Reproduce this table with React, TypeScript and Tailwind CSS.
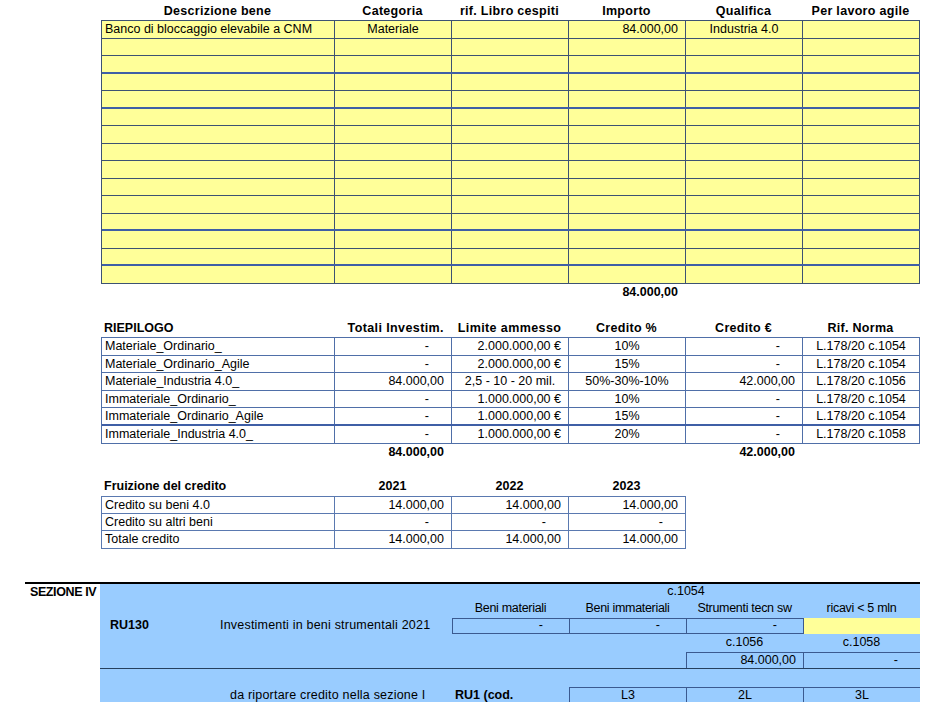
import React from "react";

const COLS = "grid grid-cols-[233px_117px_117px_117px_117px_117px]";
const THIN = "border-[#3d5273]";
const BLUE = "border-[#4f6fa8]";

type Align = "left" | "center" | "right" | "dash";

const alignClass: Record<Align, string> = {
  left: "justify-start pl-[3px]",
  center: "justify-center",
  right: "justify-end pr-[7px]",
  dash: "justify-end pr-[22px]",
};

function Cell({
  children,
  align = "left",
  className = "",
}: {
  children?: React.ReactNode;
  align?: Align;
  className?: string;
}) {
  return (
    <div className={`flex items-center overflow-hidden whitespace-nowrap ${alignClass[align]} ${className}`}>
      {children}
    </div>
  );
}

const num = (v: string): Align => (v === "-" ? "dash" : "right");

function BeniTable() {
  const headers = ["Descrizione bene", "Categoria", "rif. Libro cespiti", "Importo", "Qualifica", "Per lavoro agile"];
  const thick = [2, 4, 11, 13];
  const rows = Array.from({ length: 15 }, (_, i) => i);

  return (
    <div className="ml-[101px]">
      <div className={`${COLS} h-[20px] font-bold tracking-[0.3px]`}>
        {headers.map((h) => (
          <Cell key={h} align="center" className="pt-[2px]">
            {h}
          </Cell>
        ))}
      </div>
      <div className={`w-fit border-l border-t ${THIN} bg-[#ffff99]`}>
        {rows.map((i) => (
          <div
            key={i}
            className={`${COLS} h-[17.5px] ${
              thick.includes(i) ? "border-b-2 border-[#3f5fa6]" : `border-b ${THIN}`
            }`}
          >
            <Cell className={`border-r ${THIN}`}>{i === 0 ? "Banco di bloccaggio elevabile a CNM" : ""}</Cell>
            <Cell align="center" className={`border-r ${THIN}`}>
              {i === 0 ? "Materiale" : ""}
            </Cell>
            <Cell className={`border-r ${THIN}`} />
            <Cell align="right" className={`border-r ${THIN}`}>
              {i === 0 ? "84.000,00" : ""}
            </Cell>
            <Cell align="center" className={`border-r ${THIN}`}>
              {i === 0 ? "Industria 4.0" : ""}
            </Cell>
            <Cell className={`border-r ${THIN}`} />
          </div>
        ))}
      </div>
      <div className={`${COLS} h-[18px] font-bold`}>
        <div />
        <div />
        <div />
        <Cell align="right">84.000,00</Cell>
      </div>
    </div>
  );
}

const riepilogo = [
  ["Materiale_Ordinario_", "-", "2.000.000,00 €", "10%", "-", "L.178/20 c.1054"],
  ["Materiale_Ordinario_Agile", "-", "2.000.000,00 €", "15%", "-", "L.178/20 c.1054"],
  ["Materiale_Industria 4.0_", "84.000,00", "2,5 - 10 - 20 mil.", "50%-30%-10%", "42.000,00", "L.178/20 c.1056"],
  ["Immateriale_Ordinario_", "-", "1.000.000,00 €", "10%", "-", "L.178/20 c.1054"],
  ["Immateriale_Ordinario_Agile", "-", "1.000.000,00 €", "15%", "-", "L.178/20 c.1054"],
  ["Immateriale_Industria 4.0_", "-", "1.000.000,00 €", "20%", "-", "L.178/20 c.1058"],
];

function RiepilogoTable() {
  return (
    <div className="ml-[101px] mt-[17.5px]">
      <div className={`${COLS} h-[18px] font-bold`}>
        <Cell>RIEPILOGO</Cell>
        <Cell align="right" className="tracking-[0.4px] pr-[5px]">
          Totali Investim.
        </Cell>
        <Cell align="center" className="tracking-[0.4px]">
          Limite ammesso
        </Cell>
        <Cell align="center" className="tracking-[0.3px]">
          Credito %
        </Cell>
        <Cell align="center" className="tracking-[0.3px]">
          Credito €
        </Cell>
        <Cell align="center" className="tracking-[0.3px]">
          Rif. Norma
        </Cell>
      </div>
      <div className={`w-fit border-l border-t ${BLUE}`}>
        {riepilogo.map((r, i) => (
          <div
            key={r[0]}
            className={`${COLS} h-[17.6px] ${i === 4 ? "border-b-2 border-[#3f5fa6]" : `border-b ${BLUE}`}`}
          >
            <Cell className={`border-r ${BLUE}`}>{r[0]}</Cell>
            <Cell align={num(r[1])} className={`border-r ${BLUE}`}>
              {r[1]}
            </Cell>
            <Cell
              align={r[2].endsWith("€") ? "right" : "center"}
              className={`border-r ${BLUE} ${r[2].endsWith("€") ? "pr-[4px]" : ""}`}
            >
              {r[2]}
            </Cell>
            <Cell align="center" className={`border-r ${BLUE}`}>
              {r[3]}
            </Cell>
            <Cell align={num(r[4])} className={`border-r ${BLUE}`}>
              {r[4]}
            </Cell>
            <Cell align="center" className={`border-r ${BLUE}`}>
              {r[5]}
            </Cell>
          </div>
        ))}
      </div>
      <div className={`${COLS} h-[17px] font-bold`}>
        <div />
        <Cell align="right">84.000,00</Cell>
        <div />
        <div />
        <Cell align="right">42.000,00</Cell>
      </div>
    </div>
  );
}

const fruizione = [
  ["Credito su beni 4.0", "14.000,00", "14.000,00", "14.000,00"],
  ["Credito su altri beni", "-", "-", "-"],
  ["Totale credito", "14.000,00", "14.000,00", "14.000,00"],
];

function FruizioneTable() {
  const fcols = "grid grid-cols-[233px_117px_117px_117px]";
  return (
    <div className="ml-[101px] mt-[17px]">
      <div className={`${fcols} h-[18px] font-bold`}>
        <Cell>Fruizione del credito</Cell>
        <Cell align="center">2021</Cell>
        <Cell align="center">2022</Cell>
        <Cell align="center">2023</Cell>
      </div>
      <div className="w-fit border-l border-t border-[#5a79b0]">
        {fruizione.map((r) => (
          <div key={r[0]} className={`${fcols} h-[17.4px] border-b border-[#5a79b0]`}>
            <Cell className="border-r border-[#5a79b0]">{r[0]}</Cell>
            {r.slice(1).map((v, j) => (
              <Cell key={j} align={num(v)} className="border-r border-[#5a79b0]">
                {v}
              </Cell>
            ))}
          </div>
        ))}
      </div>
    </div>
  );
}

function SezioneIV() {
  const box = "border-[#3b5a90]";
  return (
    <div className="mt-[33px] ml-[25px] w-[895px] border-t-2 border-black flex">
      <div className="w-[75px] pl-[5px] pt-[2px] font-bold tracking-[-0.4px]">SEZIONE IV</div>
      <div className="flex-1 bg-[#99ccff] h-[120px]">
        {/* c.1054 */}
        <div className="flex h-[16px]">
          <div className="w-[352px]" />
          <Cell align="center" className="w-[468px]">
            c.1054
          </Cell>
        </div>
        <div className="flex h-[18px]">
          <div className="w-[352px]" />
          {["Beni materiali", "Beni immateriali", "Strumenti tecn sw", "ricavi < 5 mln"].map((h) => (
            <Cell key={h} align="center" className="w-[117px] tracking-[-0.3px]">
              {h}
            </Cell>
          ))}
        </div>
        {/* RU130 */}
        <div className="flex h-[16px]">
          <Cell className="w-[117px] pl-[10px] font-bold">RU130</Cell>
          <Cell className="w-[235px] tracking-[0.2px]">Investimenti in beni strumentali 2021</Cell>
          <div className={`flex border-t border-b border-l ${box}`}>
            {[0, 1, 2].map((k) => (
              <Cell key={k} align="dash" className={`w-[117px] border-r ${box} pr-[26px]`}>
                -
              </Cell>
            ))}
          </div>
          <div className="w-[116px] bg-[#ffff99] border-t border-b border-[#ffff99]" />
        </div>
        <div className="flex h-[18px]">
          <div className="w-[586px]" />
          <Cell align="center" className="w-[117px]">
            c.1056
          </Cell>
          <Cell align="center" className="w-[117px]">
            c.1058
          </Cell>
        </div>
        <div className="flex h-[17px] border-b border-[#26405f]">
          <div className="w-[586px]" />
          <div className={`flex border-t border-l ${box}`}>
            <Cell align="right" className={`w-[117px] border-r ${box}`}>
              84.000,00
            </Cell>
            <Cell align="dash" className="w-[116px]">
              -
            </Cell>
          </div>
        </div>
        <div className="h-[18px]" />
        <div className="flex h-[15px]">
          <div className="w-[127px]" />
          <Cell className="w-[225px] tracking-[0.2px] items-start pt-[2px]">da riportare credito nella sezione I</Cell>
          <Cell className="w-[117px] font-bold items-start pt-[2px]">RU1 (cod.</Cell>
          <div className={`flex border-t border-l ${box}`}>
            {["L3", "2L"].map((v) => (
              <Cell key={v} align="center" className={`w-[117px] border-r ${box} items-start pt-[1px]`}>
                {v}
              </Cell>
            ))}
            <Cell align="center" className="w-[116px] items-start pt-[1px]">
              3L
            </Cell>
          </div>
        </div>
      </div>
    </div>
  );
}

export default function App() {
  return (
    <div className="w-[950px] h-[702px] overflow-hidden bg-white text-black text-[12.5px] leading-none font-['Liberation_Sans',Arial,sans-serif]">
      <BeniTable />
      <RiepilogoTable />
      <FruizioneTable />
      <SezioneIV />
    </div>
  );
}
